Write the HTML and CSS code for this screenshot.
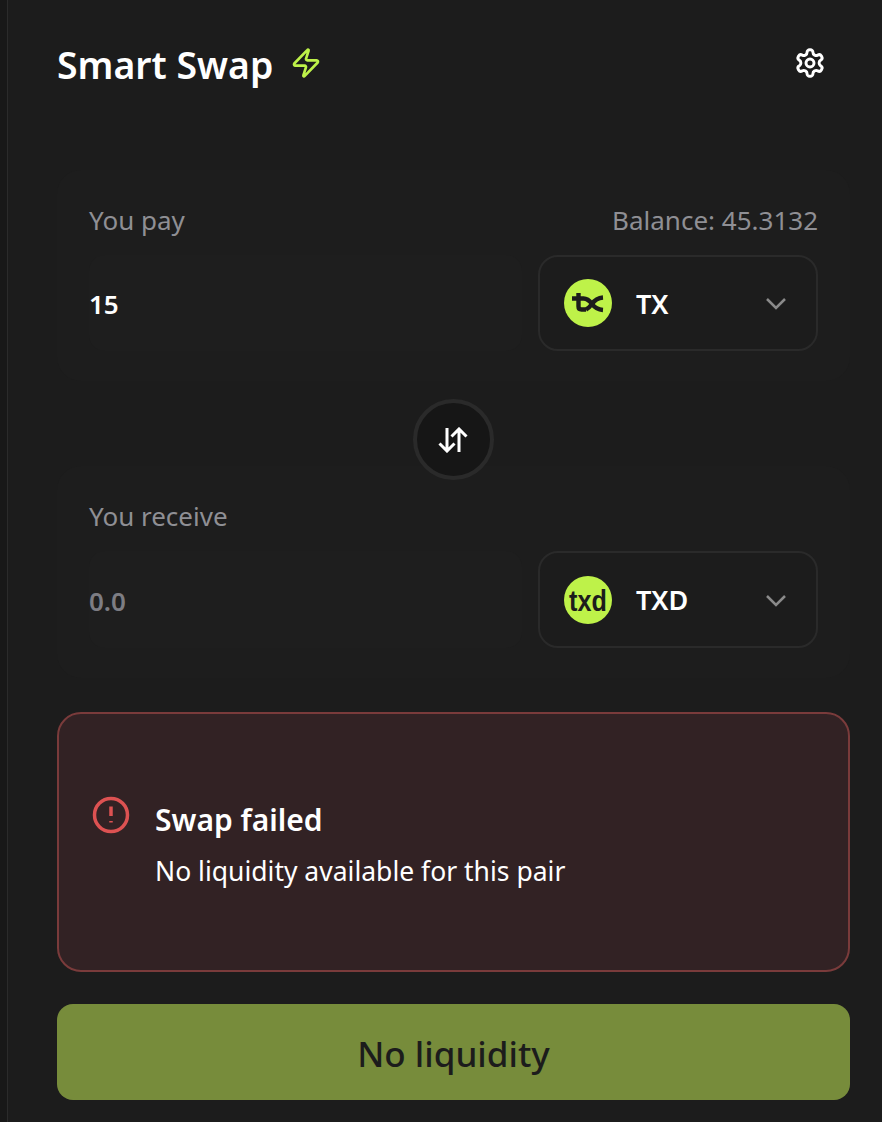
FILE: index.html
```html
<!DOCTYPE html>
<html lang="en">

<head>
    <meta charset="UTF-8">
    <title>Smart Swap</title>
    <link rel="stylesheet" href="styles.css">
</head>

<body>
    <div class="rail"></div>
    <div class="panel">
        <div class="head">
            <div class="head-title">
                <h1>Smart Swap</h1>
                <svg class="zap" viewBox="0 0 24 24"><path d="M4 14a1 1 0 0 1-.78-1.63l9.9-10.2a.5.5 0 0 1 .86.46l-1.92 6.02A1 1 0 0 0 13 10h7a1 1 0 0 1 .78 1.63l-9.9 10.2a.5.5 0 0 1-.86-.46l1.92-6.02A1 1 0 0 0 11 14z"/></svg>
            </div>
            <svg class="gear" viewBox="0 0 24 24"><path d="M12.22 2h-.44a2 2 0 0 0-2 2v.18a2 2 0 0 1-1 1.73l-.43.25a2 2 0 0 1-2 0l-.15-.08a2 2 0 0 0-2.73.73l-.22.38a2 2 0 0 0 .73 2.73l.15.1a2 2 0 0 1 1 1.72v.51a2 2 0 0 1-1 1.74l-.15.09a2 2 0 0 0-.73 2.73l.22.38a2 2 0 0 0 2.73.73l.15-.08a2 2 0 0 1 2 0l.43.25a2 2 0 0 1 1 1.73V20a2 2 0 0 0 2 2h.44a2 2 0 0 0 2-2v-.18a2 2 0 0 1 1-1.73l.43-.25a2 2 0 0 1 2 0l.15.08a2 2 0 0 0 2.73-.73l.22-.39a2 2 0 0 0-.73-2.73l-.15-.08a2 2 0 0 1-1-1.74v-.5a2 2 0 0 1 1-1.74l.15-.09a2 2 0 0 0 .73-2.73l-.22-.38a2 2 0 0 0-2.73-.73l-.15.08a2 2 0 0 1-2 0l-.43-.25a2 2 0 0 1-1-1.73V4a2 2 0 0 0-2-2z"/><circle cx="12" cy="12" r="3"/></svg>
        </div>

        <div class="card">
            <div class="card-top">
                <span>You pay</span>
                <span>Balance: 45.3132</span>
            </div>
            <div class="card-row">
                <div class="amount">15</div>
                <div class="select">
                    <svg class="coin" viewBox="0 0 48 48">
                        <circle cx="24" cy="24" r="24" fill="#bef249"/>
                        <path class="coin-mark" d="M14.500 14v13.500q0 3 3 3h4.500M8 19.500h11.500q4.500 0 8.500 5.500q4 5.500 11 6M39 18.500q-7 .5 -11 6.500q-3 4 -6 5.500"/>
                    </svg>
                    <span class="symbol">TX</span>
                    <svg class="chev" viewBox="0 0 24 24"><path d="M3 8l9 9 9-9"/></svg>
                </div>
            </div>
        </div>

        <div class="swap">
            <svg viewBox="0 0 30 26"><path d="M9 1v23M1.500 16.500L9 24l7.500-7.500M21 25V2M13.500 9.500L21 2l7.500 7.500"/></svg>
        </div>

        <div class="card">
            <div class="card-top">
                <span>You receive</span>
            </div>
            <div class="card-row">
                <div class="amount amount-empty">0.0</div>
                <div class="select select-tall">
                    <svg class="coin" viewBox="0 0 48 48">
                        <circle cx="24" cy="24" r="24" fill="#bef249"/>
                        <text class="coin-text" transform="translate(5 34.500) scale(.84 1)">txd</text>
                    </svg>
                    <span class="symbol">TXD</span>
                    <svg class="chev" viewBox="0 0 24 24"><path d="M3 8l9 9 9-9"/></svg>
                </div>
            </div>
        </div>

        <div class="error">
            <svg class="error-icon" viewBox="0 0 38 38">
                <circle cx="19" cy="19" r="16.500"/>
                <path d="M19 10.500v9.500M19 25v1.500"/>
            </svg>
            <div class="error-text">
                <h3>Swap failed</h3>
                <p>No liquidity available for this pair</p>
            </div>
        </div>

        <button class="submit">No liquidity</button>
    </div>
</body>

</html>
```

FILE: styles.css
```css
* {
    margin: 0;
    padding: 0;
    box-sizing: border-box;
}

html,
body {
    height: 100%;
}

body {
    display: flex;
    overflow: hidden;
    background: #1c1c1c;
    color: #fff;
    font-family: "Noto Sans", "Open Sans", sans-serif;
}

.rail {
    flex: none;
    width: 8px;
    background: #181818;
    border-right: 1px solid #2b2b2b;
}

.panel {
    flex: 1;
    display: flex;
    flex-direction: column;
    padding: 0 32px 22px 49px;
}

.head {
    height: 170px;
    padding: 43px 24px 0 0;
    display: flex;
    justify-content: space-between;
    align-items: flex-start;
}

.head-title {
    display: flex;
    align-items: center;
    gap: 17px;
}

.head-title h1 {
    font-size: 37.400px;
    line-height: 44px;
    font-weight: 600;
}

.zap {
    width: 32px;
    height: 32px;
    margin-bottom: 4px;
    fill: none;
    stroke: #bef249;
    stroke-width: 2;
    stroke-linejoin: round;
}

.gear {
    width: 32px;
    height: 32px;
    margin-top: 4px;
    fill: none;
    stroke: #fff;
    stroke-width: 2.200;
    stroke-linejoin: round;
}

.card {
    background: #1d1d1d;
    border-radius: 24px;
    padding: 32px 32px 30px;
}

.card-top {
    height: 36px;
    display: flex;
    justify-content: space-between;
    align-items: center;
    margin-bottom: 17px;
    font-size: 26px;
    color: #8f8f94;
}

.card-row {
    display: flex;
    gap: 16px;
}

.amount {
    flex: 1;
    padding-top: 2px;
    display: flex;
    align-items: center;
    background: #1e1e1e;
    border-radius: 16px;
    font-size: 26px;
    font-weight: 600;
}

.amount-empty {
    color: #7d7d83;
}

.select {
    flex: none;
    width: 280px;
    height: 96px;
    display: flex;
    align-items: center;
    padding: 0 28px 0 24px;
    background: #1c1c1c;
    border: 2px solid #2a2a2a;
    border-radius: 20px;
}

.select-tall {
    height: 97px;
}

.coin {
    flex: none;
    width: 48px;
    height: 48px;
}

.coin-mark {
    fill: none;
    stroke: #1c1c1c;
    stroke-width: 4.400;
}

.coin-text {
    font-family: "Liberation Sans", sans-serif;
    font-size: 30px;
    font-weight: 700;
    fill: #1c1c1c;
}

.symbol {
    flex: 1;
    margin-left: 24px;
    font-size: 27px;
    font-weight: 600;
}

.chev {
    flex: none;
    width: 24px;
    height: 24px;
    fill: none;
    stroke: #8a8a8a;
    stroke-width: 2.500;
}

.swap {
    position: relative;
    z-index: 1;
    align-self: center;
    width: 81px;
    height: 81px;
    margin: 18px 0 -14px -1px;
    display: flex;
    align-items: center;
    justify-content: center;
    background: #161616;
    border: 4px solid #2a2a2a;
    border-radius: 50%;
}

.swap svg {
    width: 30px;
    height: 26px;
    fill: none;
    stroke: #fff;
    stroke-width: 3;
}

.error {
    height: 260px;
    margin-top: 34px;
    padding: 0 33px;
    display: flex;
    align-items: center;
    gap: 25px;
    background: #322224;
    border: 2px solid #7a3b3b;
    border-radius: 24px;
}

.error-icon {
    flex: none;
    align-self: flex-start;
    width: 38px;
    height: 38px;
    margin-top: 82px;
    fill: none;
    stroke: #dd5252;
    stroke-width: 3.500;
}

.error-text {
    padding-top: 4px;
}

.error-text h3 {
    font-size: 30px;
    line-height: 40px;
    font-weight: 600;
}

.error-text p {
    margin-top: 13px;
    font-size: 26.500px;
    line-height: 36px;
}

.submit {
    height: 96px;
    margin-top: 32px;
    padding-top: 2px;
    background: #778c3b;
    border: none;
    border-radius: 16px;
    color: #1c1c1c;
    font-family: inherit;
    font-size: 35px;
    font-weight: 500;
}
```
